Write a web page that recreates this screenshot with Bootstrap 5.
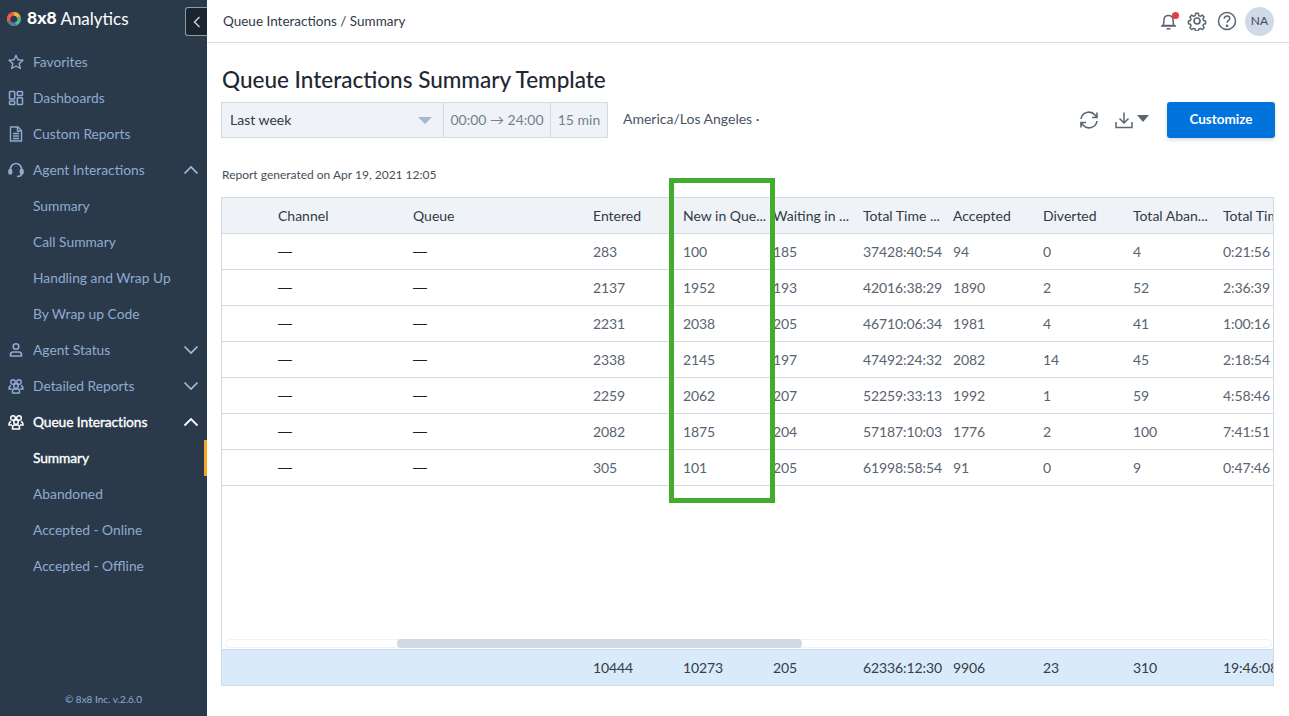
<!DOCTYPE html>
<html lang="en">
<head>
  <meta charset="UTF-8">
  <title>Queue Interactions Summary</title>
  <link href="https://cdn.jsdelivr.net/npm/bootstrap@5.3.0/dist/css/bootstrap.min.css" rel="stylesheet">
  <style>
    html, body { height: 100%; overflow: hidden; }
    body { font-family: "Lato", "Liberation Sans", sans-serif; font-size: 14px; color: #3b4450; background: #fff; }

    /* Sidebar */
    .side-bar { width: 207px; height: 716px; background: #2b3a4b; position: relative; flex: none; }
    .side-brand { height: 44px; padding: 0 0 7px 7px; color: #fff; font-size: 17px; }
    .side-brand b { font-weight: 900; margin-left: 6px; font-size: 17.5px; }
    .side-toggle { position: absolute; left: 185px; top: 7px; width: 22px; height: 29px; background: #1b2530; border: 1px solid #8d9aa9; border-right: 0; border-radius: 3px 0 0 3px; }
    .side-link { height: 36px; padding: 0 0 0 33px; color: #8fabcf; font-size: 13.8px; position: relative; }
    .side-link svg.ico { position: absolute; left: 8px; top: 10px; width: 16px; height: 16px; }
    .side-link svg.chev { position: absolute; left: 183px; top: 13px; width: 16px; height: 10px; }
    .side-link.now { color: #fff; font-weight: 400; -webkit-text-stroke: .35px #fff; letter-spacing: -.1px; }
    .side-link.mark-bar { border-right: 3px solid #f5a623; }
    .side-foot { position: absolute; left: 0; right: 0; top: 692px; text-align: center; font-size: 10px; color: #8fabcf; }

    /* Top bar */
    .top-bar { height: 43px; border-bottom: 1px solid #d3dde8; padding: 0 15px 0 16px; font-size: 13.5px; color: #2f3a46; }
    .top-icons { gap: 10px; }
    .avatar { width: 29px; height: 29px; border-radius: 50%; background: #d0d9e6; color: #3d4a5c; font-size: 12px; margin-left: -2px; }
    .bell-dot { position: absolute; width: 7px; height: 7px; border-radius: 50%; background: #ea3a3d; left: 12px; top: 0; }

    /* Filter strip */
    .page-title { font-size: 22.5px; font-weight: 500; color: #1f2733; margin: 0 0 8px 1px; line-height: 29px; }
    .filter-box { height: 36px; width: 387px; background: #eff3f8; border: 1px solid #cfdbe9; font-size: 14px; }
    .filter-box > div { height: 100%; border-right: 1px solid #cfdbe9; color: #75808c; padding-bottom: 2px; }
    .filter-box > div:last-child { border-right: 0; }
    .f-range { width: 222px; color: #2f3a46 !important; padding: 0 11px 2px 8px !important; }
    .f-time { width: 107px; }
    .f-caret { width: 0; height: 0; border-left: 7px solid transparent; border-right: 7px solid transparent; border-top: 7px solid #a3b8d3; margin-top: 2px; }
    .tz-text { margin: 0 0 4px 15px; font-size: 14px; color: #4a535f; }
    .dl-caret { width: 0; height: 0; border-left: 6px solid transparent; border-right: 6px solid transparent; border-top: 7px solid #5b6672; margin-bottom: 4px; }
    .btn-customize { width: 108px; height: 36px; padding: 0 0 2px; background: #0073dc; color: #fff; font-weight: 700; font-size: 13.5px; border: 0; border-radius: 3px; box-shadow: 0 2px 4px rgba(0,0,0,.15); margin-left: 18px; }
    .btn-customize:hover { background: #0073dc; color: #fff; }
    .gen-text { font-size: 12px; color: #454e5a; margin: 29px 0 14px 1px; line-height: 16px; }

    /* Report table */
    .report-wrap { width: 1053px; height: 489px; border: 1px solid #cfdbe9; overflow: hidden; position: relative; }
    .report-body { height: 451px; overflow: hidden; position: relative; }
    .report-grid { table-layout: fixed; width: 1081px; border-collapse: collapse; font-size: 14px; }
    .report-grid td, .report-grid th { height: 36px; padding: 0 0 0 10px; white-space: nowrap; font-weight: 400; vertical-align: middle; }
    .report-grid thead th { height: 35px; padding-top: 1px; background: #eff3f8; color: #2f3a46; border-bottom: 1px solid #cfdbe9; }
    .report-grid tbody td { color: #59636f; border-bottom: 1px solid #cfdbe9; letter-spacing: -.1px; }
    .report-grid.foot-grid tbody td { padding-bottom: 2px; background: #d9eafa; color: #333c47; border-bottom: 0; }
    .foot-line { border-top: 1px solid #cfdbe9; }
    .dash-mark { font-family: "Liberation Sans", sans-serif; color: #222; letter-spacing: 0; }
    .scroll-track { position: absolute; left: 3px; right: 1px; bottom: 1px; height: 9px; border: 1px solid #f0f2f5; border-radius: 5px; background: #fff; }
    .scroll-thumb { height: 9px; width: 405px; margin: -1px 0 0 171px; background: #d1d9e6; border-radius: 4px; }

    /* Green highlight drawn over the screenshot */
    .hilite { position: absolute; left: 669px; top: 178px; width: 106px; height: 325px; border: 5px solid #43ac2c; pointer-events: none; }
  </style>
</head>
<body>
  <div class="d-flex">

    <!-- Sidebar -->
    <aside class="side-bar">
      <div class="side-brand d-flex align-items-center">
        <svg width="14" height="14" viewBox="0 0 14 14" fill="none" stroke-width="3.6">
          <path d="M2.100 9.500A5.200 5.200 0 0 1 6.500 1.900" stroke="#ef5a45"/>
          <path d="M6.500 1.900A5.200 5.200 0 0 1 11.900 5.500" stroke="#f2b134"/>
          <path d="M11.900 5.500A5.200 5.200 0 0 1 8.500 12" stroke="#58b89a"/>
          <path d="M8.500 12A5.200 5.200 0 0 1 2.100 9.500" stroke="#4d7f96"/>
        </svg>
        <b>8x8</b>&nbsp;Analytics
      </div>
      <div class="side-toggle d-flex align-items-center justify-content-center">
        <svg width="8" height="12" viewBox="0 0 8 12" fill="none" stroke="#cdd6e0" stroke-width="1.400"><path d="M6.500 1 1.500 6l5 5"/></svg>
      </div>

      <nav>
        <div class="side-link d-flex align-items-center">
          <svg class="ico" viewBox="0 0 16 16" fill="none" stroke="#8fabcf" stroke-width="1.400" stroke-linejoin="round"><path d="M8 1.200 10 5.800l5 .5-3.800 3.300 1.100 4.900L8 12l-4.300 2.500 1.100-4.900L1 6.300l5-.5z"/></svg>
          Favorites
        </div>
        <div class="side-link d-flex align-items-center">
          <svg class="ico" viewBox="0 0 16 16" fill="none" stroke="#8fabcf" stroke-width="1.500"><rect x="1.500" y="1.500" width="5.200" height="7.500" rx=".8"/><rect x="9.300" y="1.500" width="5.200" height="4" rx=".8"/><rect x="1.500" y="11" width="5.200" height="3.500" rx=".8"/><rect x="9.300" y="7.800" width="5.200" height="6.700" rx=".8"/></svg>
          Dashboards
        </div>
        <div class="side-link d-flex align-items-center">
          <svg class="ico" viewBox="0 0 16 16" fill="none" stroke="#8fabcf" stroke-width="1.400"><path d="M2.500 1h7.500l3.500 3.500V15h-11z"/><path d="M9.500 1v4h4M5 7.500h6M5 10h6M5 12.500h6"/></svg>
          Custom Reports
        </div>
        <div class="side-link d-flex align-items-center">
          <svg class="ico" viewBox="0 0 16 16" fill="none" stroke="#8fabcf" stroke-width="1.600"><path d="M2.500 9V7a5.500 5.500 0 0 1 11 0v2"/><rect x="1" y="7.500" width="2.600" height="4.500" rx="1.200" fill="#8fabcf"/><rect x="12.400" y="7.500" width="2.600" height="4.500" rx="1.200" fill="#8fabcf"/><path d="M13.500 12c0 1.800-1.500 2.500-4.500 2.500"/></svg>
          Agent Interactions
          <svg class="chev" viewBox="0 0 16 10" fill="none" stroke="#a9bdd6" stroke-width="1.600"><path d="M1.500 8.500 8 2l6.500 6.500"/></svg>
        </div>
        <div class="side-link d-flex align-items-center">Summary</div>
        <div class="side-link d-flex align-items-center">Call Summary</div>
        <div class="side-link d-flex align-items-center">Handling and Wrap Up</div>
        <div class="side-link d-flex align-items-center">By Wrap up Code</div>
        <div class="side-link d-flex align-items-center">
          <svg class="ico" viewBox="0 0 16 16" fill="none" stroke="#8fabcf" stroke-width="1.600"><circle cx="8" cy="4.500" r="2.800"/><path d="M2.500 14v-1.500c0-1.500 1.500-2.500 3-2.500h5c1.500 0 3 1 3 2.500V14z"/></svg>
          Agent Status
          <svg class="chev" viewBox="0 0 16 10" fill="none" stroke="#a9bdd6" stroke-width="1.600"><path d="M1.500 1.500 8 8l6.500-6.500"/></svg>
        </div>
        <div class="side-link d-flex align-items-center">
          <svg class="ico" viewBox="0 0 16 16" fill="none" stroke="#8fabcf" stroke-width="1.400"><circle cx="5" cy="4" r="2.300"/><circle cx="11" cy="4" r="2.300"/><circle cx="8" cy="8" r="2.300"/><path d="M3 7.500c-1.500.5-2 1.500-2 3.500h3M13 7.500c1.500.5 2 1.500 2 3.500h-3M4.500 15v-1.500c0-1.500 1-2.500 2-2.500h3c1 0 2 1 2 2.500V15z"/></svg>
          Detailed Reports
          <svg class="chev" viewBox="0 0 16 10" fill="none" stroke="#a9bdd6" stroke-width="1.600"><path d="M1.500 1.500 8 8l6.500-6.500"/></svg>
        </div>
        <div class="side-link now d-flex align-items-center">
          <svg class="ico" viewBox="0 0 16 16" fill="none" stroke="#fff" stroke-width="1.500"><circle cx="5" cy="4" r="2.300"/><circle cx="11" cy="4" r="2.300"/><circle cx="8" cy="8" r="2.300"/><path d="M3 7.500c-1.500.5-2 1.500-2 3.500h3M13 7.500c1.500.5 2 1.500 2 3.500h-3M4.500 15v-1.500c0-1.500 1-2.500 2-2.500h3c1 0 2 1 2 2.500V15z"/></svg>
          Queue Interactions
          <svg class="chev" viewBox="0 0 16 10" fill="none" stroke="#fff" stroke-width="1.800"><path d="M1.500 8.500 8 2l6.500 6.500"/></svg>
        </div>
        <div class="side-link now mark-bar d-flex align-items-center">Summary</div>
        <div class="side-link d-flex align-items-center">Abandoned</div>
        <div class="side-link d-flex align-items-center">Accepted - Online</div>
        <div class="side-link d-flex align-items-center">Accepted - Offline</div>
      </nav>
      <div class="side-foot">© 8x8 Inc. v.2.6.0</div>
    </aside>

    <!-- Main -->
    <main class="flex-grow-1" style="min-width:0">
      <div class="top-bar d-flex align-items-center justify-content-between">
        <span>Queue Interactions / Summary</span>
        <div class="top-icons d-flex align-items-center">
          <span class="position-relative d-inline-flex">
            <svg width="17" height="18" viewBox="0 0 17 18" fill="none" stroke="#5b6672" stroke-width="1.500"><path d="M3 13.500c.8-1.500.9-3 .9-5 0-3 1.800-5 4.600-5s4.600 2 4.600 5c0 2 .1 3.500.9 5z"/><path d="M1 14h15M6.500 16.800h4"/></svg>
            <span class="bell-dot"></span>
          </span>
          <svg width="20" height="20" viewBox="0 0 20 20" fill="none" stroke="#5b6672" stroke-width="1.700" stroke-linejoin="round"><circle cx="10" cy="10" r="3"/><path d="M8.500 1.500h3l.5 2.500 1.700.8 2.200-1.300 2 2.100-1.300 2.200.7 1.700 2.200.5v3l-2.200.5-.7 1.700 1.300 2.200-2 2.100-2.200-1.300-1.700.7-.5 2.300h-3l-.5-2.300-1.700-.7-2.200 1.300-2-2.100 1.300-2.200-.7-1.700-2.200-.5v-3l2.200-.5.7-1.700-1.300-2.200 2-2.100 2.200 1.300 1.700-.8z" transform="translate(1 1) scale(.9)"/></svg>
          <svg width="20" height="20" viewBox="0 0 20 20" fill="none" stroke="#5b6672" stroke-width="1.500"><circle cx="10" cy="10" r="8.500"/><path d="M7.300 7.800c0-1.700 1.200-2.800 2.800-2.800s2.700 1 2.700 2.400c0 2.200-2.800 2.200-2.800 4.400"/><circle cx="10" cy="14.800" r=".6" fill="#5b6672"/></svg>
          <div class="avatar d-flex align-items-center justify-content-center">NA</div>
        </div>
      </div>

      <div style="padding: 22px 14px 0">
        <h1 class="page-title">Queue Interactions Summary Template</h1>

        <div class="d-flex align-items-center justify-content-between">
          <div class="d-flex align-items-center">
            <div class="filter-box d-flex">
              <div class="f-range d-flex align-items-center justify-content-between">Last week <span class="f-caret"></span></div>
              <div class="f-time d-flex align-items-center justify-content-center">00:00 → 24:00</div>
              <div class="flex-grow-1 d-flex align-items-center justify-content-center">15 min</div>
            </div>
            <span class="tz-text">America/Los Angeles ·</span>
          </div>
          <div class="d-flex align-items-center">
            <svg width="20" height="20" viewBox="0 0 20 20" fill="none" stroke="#5b6672" stroke-width="1.600"><path d="M2 9a8 8 0 0 1 14-4l2 2.500M18 2.500v5h-5M18 11a8 8 0 0 1-14 4l-2-2.500M2 17.500v-5h5"/></svg>
            <svg class="ms-3" width="18" height="18" viewBox="0 0 18 18" fill="none" stroke="#5b6672" stroke-width="1.500"><path d="M9 1.500v10M4.500 7.500 9 12l4.500-4.500M1 11v5.500h16V11"/></svg>
            <span class="dl-caret ms-1"></span>
            <button class="btn btn-customize">Customize</button>
          </div>
        </div>

        <p class="gen-text">Report generated on Apr 19, 2021 12:05</p>

        <div class="report-wrap">
          <div class="report-body">
            <table class="report-grid" id="reportTable"></table>
            <div class="scroll-track"><div class="scroll-thumb"></div></div>
          </div>
          <div class="foot-line"><table class="report-grid foot-grid" id="footTable"></table></div>
        </div>
      </div>
    </main>
  </div>

  <div class="hilite"></div>

  <script>
    const widths = [46, 135, 180, 90, 90, 90, 90, 90, 90, 90, 90];
    const colgroup = "<colgroup>" + widths.map(w => `<col style="width:${w}px">`).join("") + "</colgroup>";
    // The headers read truncated in the report, so the short forms are the text
    const heads = ["", "Channel", "Queue", "Entered", "New in Que...", "Waiting in ...", "Total Time ...", "Accepted", "Diverted", "Total Aban...", "Total Tim"];
    const rows = [
      [283, 100, 185, "37428:40:54", 94, 0, 4, "0:21:56"],
      [2137, 1952, 193, "42016:38:29", 1890, 2, 52, "2:36:39"],
      [2231, 2038, 205, "46710:06:34", 1981, 4, 41, "1:00:16"],
      [2338, 2145, 197, "47492:24:32", 2082, 14, 45, "2:18:54"],
      [2259, 2062, 207, "52259:33:13", 1992, 1, 59, "4:58:46"],
      [2082, 1875, 204, "57187:10:03", 1776, 2, 100, "7:41:51"],
      [305, 101, 205, "61998:58:54", 91, 0, 9, "0:47:46"]
    ];
    const foot = ["", "", "", 10444, 10273, 205, "62336:12:30", 9906, 23, 310, "19:46:08"];
    const dash = '<td><span class="dash-mark">—</span></td>';

    let html = colgroup + "<thead><tr>" + heads.map(h => `<th>${h}</th>`).join("") + "</tr></thead><tbody>";
    rows.forEach(r => {
      html += "<tr><td></td>" + dash + dash + r.map(v => `<td>${v}</td>`).join("") + "</tr>";
    });
    document.getElementById("reportTable").innerHTML = html + "</tbody>";
    document.getElementById("footTable").innerHTML = colgroup + "<tr>" + foot.map(v => `<td>${v}</td>`).join("") + "</tr>";
  </script>
  <script src="https://cdn.jsdelivr.net/npm/bootstrap@5.3.0/dist/js/bootstrap.bundle.min.js"></script>
</body>
</html>
